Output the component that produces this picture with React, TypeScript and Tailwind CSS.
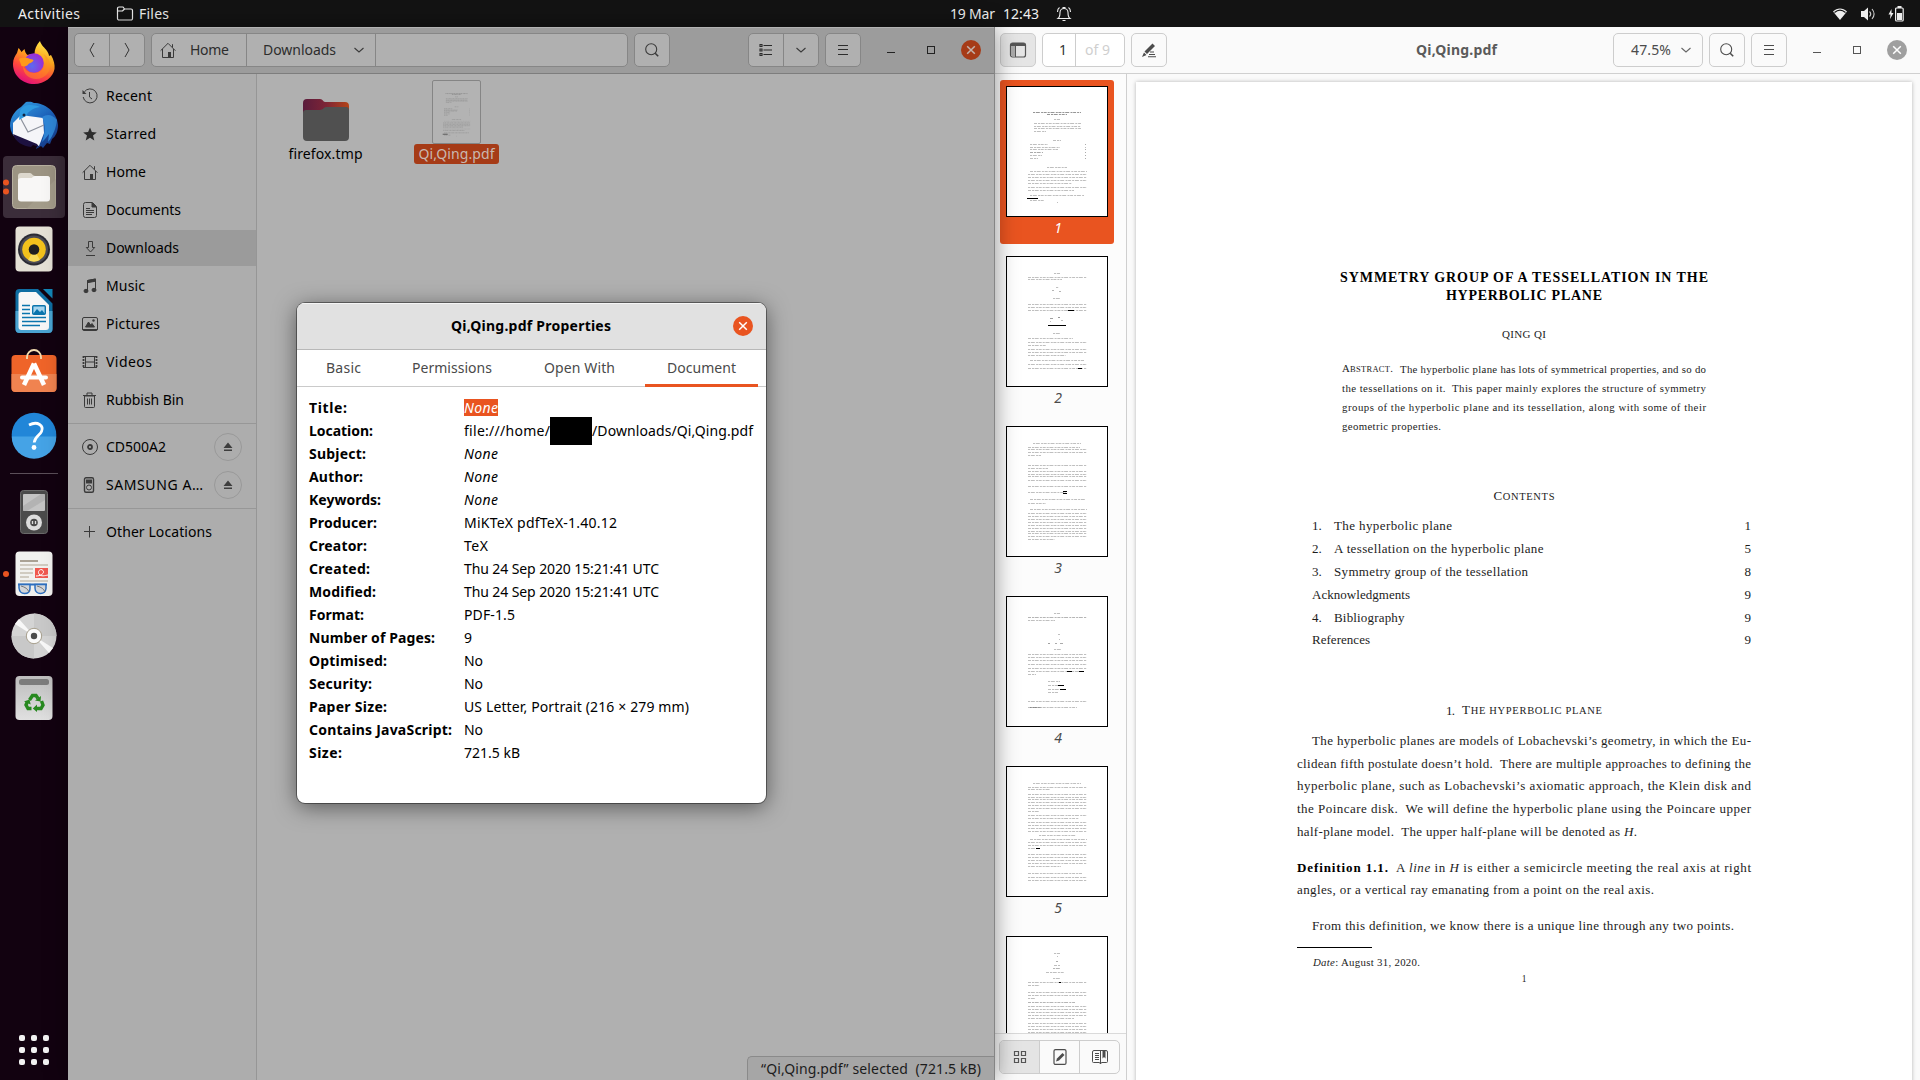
import { useLayoutEffect, useRef, useState } from "react";
import type { ReactNode } from "react";

/* Single text run whose tracking is adjusted so that it fills `w` pixels. */
function Fit({ w, className = "", children }: { w: number; className?: string; children: ReactNode }) {
  const ref = useRef<HTMLSpanElement>(null);
  const [ls, setLs] = useState(0);
  useLayoutEffect(() => {
    const el = ref.current;
    if (!el) return;
    const n = (el.textContent ?? "").length;
    const natural = el.getBoundingClientRect().width;
    if (n > 1) setLs((w - natural) / (n - 1));
  }, [w]);
  return (
    <span ref={ref} className={"inline-block shrink-0 whitespace-pre " + className} style={{ letterSpacing: ls, marginRight: -ls }}>
      {children}
    </span>
  );
}

/* ---------- Small symbolic icons ---------- */

const HomeIcon = () => (
  <svg width="16" height="16" viewBox="0 0 16 16" fill="none" stroke="#3a3a3a" strokeWidth="1">
    <path d="M.6 8.7 8 1.3l7.4 7.4M2.5 7v8.5h11V7M12.5 5.5V2.2" />
    <path d="M8 10h3v5.5H8z" fill="#3a3a3a" stroke="none" />
  </svg>
);
const icons: Record<string, ReactNode> = {
  recent: (
    <svg width="16" height="16" viewBox="0 0 16 16" fill="none" stroke="#3a3a3a">
      <path d="M2.3 4A7 7 0 1 1 1.2 9" />
      <path d="M7.5 4v5l2.5 2" />
      <path d="M.5 2v4h4z" fill="#3a3a3a" stroke="none" />
    </svg>
  ),
  starred: (
    <svg width="16" height="16" viewBox="0 0 16 16">
      <path d="m8 1.5 1.9 4.6 4.9.3-3.8 3.1 1.3 5L8 11.8l-4.3 2.7 1.3-5L1.2 6.4l4.9-.3z" fill="#2d2d2d" />
    </svg>
  ),
  home: <HomeIcon />,
  documents: (
    <svg width="16" height="16" viewBox="0 0 16 16" fill="none" stroke="#3a3a3a">
      <path d="M3.5.5h7l4 4v9a2 2 0 0 1-2 2h-9a2 2 0 0 1-2-2v-11a2 2 0 0 1 2-2z" />
      <path d="M10 1v4h4zM4 6.5h4M4 8.5h8M4 10.5h8M4 12.5h6" fill="#3a3a3a" />
    </svg>
  ),
  downloads: (
    <svg width="16" height="16" viewBox="0 0 16 16" fill="none" stroke="#3a3a3a">
      <path d="M6.5 1.500h4v6h2.200L8.500 12 4.300 7.500h2.200zM4 15.500h9" />
    </svg>
  ),
  music: (
    <svg width="16" height="16" viewBox="0 0 16 16" fill="none" stroke="#3a3a3a">
      <path d="M5.500 13V2.500L13.500 1v11" />
      <path d="M5.500 2.500 13.500 1v2.200l-8 1.500z" fill="#3a3a3a" />
      <ellipse cx="4" cy="13" rx="2" ry="1.700" fill="#3a3a3a" />
      <ellipse cx="12" cy="12" rx="2" ry="1.700" fill="#3a3a3a" />
    </svg>
  ),
  pictures: (
    <svg width="16" height="16" viewBox="0 0 16 16" fill="none" stroke="#3a3a3a">
      <rect x=".5" y="1.500" width="15" height="13" rx="1.500" />
      <path d="M.5 13.500h15M3.500 11l3-5 2 3 1.500-1.500 2.500 3.500z" fill="#3a3a3a" />
      <circle cx="11.500" cy="4.500" r="1.200" fill="#3a3a3a" stroke="none" />
    </svg>
  ),
  videos: (
    <svg width="16" height="16" viewBox="0 0 16 16" fill="none" stroke="#3a3a3a">
      <path d="M1 2.500h14M1 13.500h14M4 8h8M3.500 2v12M12.500 2v12" />
      <path d="M1.500 2v12M14.500 2v12" strokeWidth="1.800" strokeDasharray="2 1" />
    </svg>
  ),
  bin: (
    <svg width="16" height="16" viewBox="0 0 16 16" fill="none" stroke="#3a3a3a">
      <path d="M1 3.500h13M5 3V1h5v2M2.500 4v10.500a1 1 0 0 0 1 1h8a1 1 0 0 0 1-1V4M5.500 6.500v6M7.500 6.500v6M9.500 6.500v6" />
      <path d="M2 3h11v1.500H2z" fill="#3a3a3a" stroke="none" />
    </svg>
  ),
  disc: (
    <svg width="16" height="16" viewBox="0 0 16 16" fill="none" stroke="#3a3a3a">
      <circle cx="8" cy="8" r="7.500" />
      <circle cx="8" cy="8" r="2" strokeWidth="1.800" />
    </svg>
  ),
  player: (
    <svg width="16" height="16" viewBox="0 0 16 16" fill="none" stroke="#3a3a3a">
      <rect x="2.500" y=".8" width="9" height="14.400" rx="1.500" strokeWidth="1.400" />
      <path d="M4 2.500h6v4H4z" fill="#3a3a3a" stroke="none" />
      <circle cx="7" cy="10.500" r="2.500" />
    </svg>
  ),
  plus: (
    <svg width="16" height="16" viewBox="0 0 16 16" fill="none" stroke="#3a3a3a">
      <path d="M7.500 2v11.500M2 7.500h11" />
    </svg>
  ),
};

const Chevron = ({ color = "#3a3a3a" }: { color?: string }) => (
  <svg width="12" height="12" viewBox="0 0 12 12" fill="none" stroke={color} strokeWidth="1.100">
    <path d="m1.500 4 4.500 4L10.500 4" />
  </svg>
);
const Search = ({ color = "#3a3a3a" }: { color?: string }) => (
  <svg width="16" height="16" viewBox="0 0 16 16" fill="none" stroke={color} strokeWidth="1.100">
    <circle cx="7.200" cy="7.200" r="5.500" />
    <path d="m11.200 11.200 3 3" strokeWidth="1.600" />
  </svg>
);
const Burger = ({ color = "#2d2d2d" }: { color?: string }) => (
  <svg width="16" height="16" viewBox="0 0 16 16" stroke={color}>
    <path d="M3 3.500h10M3 7.500h10M3 12.500h10" />
  </svg>
);
const Cross = ({ color }: { color: string }) => (
  <svg width="20" height="20" viewBox="0 0 20 20" stroke={color} strokeWidth="1.500">
    <path d="m6.200 6.200 7.600 7.600M13.800 6.200l-7.600 7.600" />
  </svg>
);

/* ---------- Dock icons (48 px grid) ---------- */

const Firefox = () => (
  <svg width="48" height="48" viewBox="0 0 48 48">
    <defs>
      <linearGradient id="ff1" x1=".8" y1="0" x2=".35" y2="1">
        <stop offset="0" stopColor="#fff14f" />
        <stop offset=".4" stopColor="#ffa51e" />
        <stop offset=".7" stopColor="#ff4a3c" />
        <stop offset="1" stopColor="#e2107a" />
      </linearGradient>
      <radialGradient id="ff2" cx=".4" cy=".65" r=".6">
        <stop offset="0" stopColor="#5a6bf0" />
        <stop offset="1" stopColor="#9a2fd6" />
      </radialGradient>
    </defs>
    <path d="M30 2c1 4 5 7 7 10 1 2 2 3 2 5l2-1c3 5 4 10 3.500 14C43 38 35 45 24 45S3 37 3 25c0-5 2-8 4-11l1.500-5c1 1 2 2 3 4l3-3c.5 3 1.500 5 3 6 2-1 4-1 7-1 0-5 2-9 5.500-13z" fill="url(#ff1)" />
    <circle cx="24" cy="24" r="9.800" fill="url(#ff2)" />
    <path d="M9 20c3-2 9-1 11 0 2 .5 3.500.5 3.500 1.500-1 2-4 2.500-5 3.500-1 2-4 3-7 2z" fill="#ff9a1a" />
    <path d="M33 15c3 3 4 8 1 13-2 4-6 6-10 6-5 0-9-3-11-7 0 8 6 13 13 13 9 0 15-7 14-15-1-5-3-8-7-10z" fill="#ff9420" opacity=".5" />
  </svg>
);
const Thunderbird = () => (
  <svg width="48" height="48" viewBox="0 0 48 48">
    <defs>
      <linearGradient id="tb1" x1=".2" y1="0" x2=".8" y2="1">
        <stop offset="0" stopColor="#3098dd" />
        <stop offset=".5" stopColor="#1b5eb8" />
        <stop offset="1" stopColor="#173a86" />
      </linearGradient>
    </defs>
    <path d="M16 1c4-.5 6 0 8 1 10 0 23 8 24 22 0 6-2 11-6 14l-2 5-3-1-4 5-2-2-5 3 2-5C12 45 1 37 0 25 0 15 6 9 11 6z" fill="url(#tb1)" />
    <path d="M3 22l8-8 22 3 1 15-5 13L3 34z" fill="#f5f5f8" />
    <path d="m11 18 7 13 16-7" fill="none" stroke="#8d929d" strokeWidth="1.200" />
    <path d="M10 10C13 3 22 3 30 6c-8 1-12 5-14 9l-7 4z" fill="#2f9be0" />
    <path d="M32 16c5-3 10-3 15 3-1 8-4 16-9 22l1-8-4 5-3 3c3-9 4-17 0-25z" fill="#2f86d6" />
    <circle cx="14" cy="14" r="1.500" fill="#13233f" />
    <path d="M3 33l24 10 2 3-6-2-2 2C13 45 5 41 3 33z" fill="#1d1140" />
  </svg>
);
const FilesApp = () => (
  <svg width="48" height="48" viewBox="0 0 48 48">
    <rect x="2.500" y="2.500" width="43" height="43" rx="4" fill="#9c9483" stroke="#b7b09f" />
    <path d="M46 16v26a4 4 0 0 1-4 4H16z" fill="#a9a190" opacity=".6" />
    <path d="M8 13a3 3 0 0 1 3-3h9c2 0 2.500 3 5 3h12a3 3 0 0 1 3 3v6H8z" fill="#ddd8cd" />
    <rect x="8" y="15" width="32" height="23.500" rx="3" fill="#f8f7f6" />
    <path d="M8 18c0-1 1-2 2-2h10c2 0 2.500-3 5-3h12a3 3 0 0 1 3 3v6H8z" fill="#f8f7f6" />
  </svg>
);
const Speaker = () => (
  <svg width="48" height="48" viewBox="0 0 48 48">
    <rect x="5.500" y="1.500" width="37" height="45" rx="4" fill="#e5e1d6" />
    <circle cx="24" cy="24.500" r="16" fill="#2b2b34" />
    <circle cx="24" cy="24.500" r="14" fill="#4b4b55" />
    <circle cx="24" cy="24.500" r="11.800" fill="#f2c11c" />
    <path d="M24 24.500 18 35a12 12 0 0 0 12 0z" fill="#f9dc5a" />
    <circle cx="24" cy="24.500" r="5.300" fill="#202020" />
  </svg>
);
const Writer = () => (
  <svg width="48" height="48" viewBox="0 0 48 48">
    <path d="M9.500 2H28l14.500 14.500V42a4 4 0 0 1-4 4h-29a4 4 0 0 1-4-4V6a4 4 0 0 1 4-4z" fill="#0f6ea3" />
    <path d="M5.500 24h37v18a4 4 0 0 1-4 4h-29a4 4 0 0 1-4-4z" fill="#4aa3d1" />
    <path d="M33 2h9.500v9.500z" fill="#1286b8" />
    <path d="M11.500 5H26l13 13v22a3 3 0 0 1-3 3H11.500a3 3 0 0 1-3-3V8a3 3 0 0 1 3-3z" fill="#f7f7f7" />
    <path d="M12 18.500h8M12 22.500h8M12 26.500h8M12 30.500h24M12 34.500h24M12 38.500h18" stroke="#0b75ad" strokeWidth="1.700" />
    <rect x="22.700" y="18.700" width="12.600" height="8.600" rx="1" fill="#a6d5ef" stroke="#0b75ad" strokeWidth="1.400" />
    <path d="m23 27 4-5 3 3 2-2 3 4z" fill="#0b75ad" />
  </svg>
);
const Software = () => (
  <svg width="48" height="48" viewBox="0 0 48 48">
    <rect x="1.500" y="6" width="45" height="37" rx="4" fill="#ef6429" />
    <path d="M1.500 25h45v14a4 4 0 0 1-4 4h-37a4 4 0 0 1-4-4z" fill="#f08350" />
    <path d="M17 10V8a7 7 0 0 1 14 0v2" fill="none" stroke="#f3ddb1" strokeWidth="1.800" />
    <path d="M24 14.500 14 36M24 14.500 34 36" fill="none" stroke="#fff" strokeWidth="4.500" />
    <path d="M12 28.500h24" stroke="#fff" strokeWidth="4" strokeLinecap="round" />
  </svg>
);
const Help = () => (
  <svg width="48" height="48" viewBox="0 0 48 48">
    <circle cx="24" cy="24" r="22.300" fill="#2186d8" />
    <path d="M1.700 25.500a22.300 22.300 0 0 0 44.600 0z" fill="#45a3e6" />
    <path d="M19 14c9-4.500 15 1 12.500 6.500-1.700 3.800-6.800 5-7.300 11" fill="none" stroke="#fff" strokeWidth="2.800" />
    <circle cx="24" cy="36.500" r="2.400" fill="#fff" />
  </svg>
);
const Ipod = () => (
  <svg width="48" height="48" viewBox="0 0 48 48">
    <rect x="10.500" y="2.500" width="27" height="43" rx="3" fill="#4b4b4b" stroke="#6a6a6a" />
    <rect x="13" y="6" width="22" height="17" rx="1" fill="#c4c4c4" />
    <path d="M13 18 31 6h4v6L17 23h-4z" fill="#a8a8a8" opacity=".6" />
    <circle cx="24" cy="34.500" r="8" fill="#dcdcdc" />
    <circle cx="24" cy="34.500" r="3.800" fill="#4b4b4b" />
    <path d="M22.500 33v3M25.500 33v3" stroke="#dcdcdc" strokeWidth="1.300" />
  </svg>
);
const EvinceApp = () => (
  <svg width="48" height="48" viewBox="0 0 48 48">
    <rect x="5.500" y="1.500" width="37" height="44.500" rx="4" fill="#f1f1ef" />
    <path d="M10 11h18" stroke="#aaa295" strokeWidth="2" />
    <path d="M10 15h28M10 19h13M10 23h13M10 27h9M10 31h28" stroke="#c5bfb2" strokeWidth="1.700" />
    <rect x="25" y="18" width="13" height="10" fill="#f0584f" />
    <path d="M26 26c5 0 9-3 7-5.500s-6 .5-4 3.500 6 1.500 9 1" fill="none" stroke="#fff" />
    <path d="M8 34.500h29" stroke="#2e6fbf" strokeWidth="2" />
    <path d="M9 34.500h11v4c0 4-3 5-5.500 5S9.500 42 9 38zM25 34.500h11v4c-.5 4-3 5-5.500 5S25 42 25 38z" fill="#d3d6da" stroke="#2e6fbf" strokeWidth="1.500" />
    <path d="M11 36c4 1 7 3 8 6M27 36c4 1 7 3 8 6" fill="none" stroke="#777" />
  </svg>
);
const Disc = () => (
  <svg width="48" height="48" viewBox="0 0 48 48">
    <circle cx="24" cy="24" r="22.500" fill="#d4d4d4" />
    <path d="M24 24V1.500A22.500 22.500 0 0 1 46.500 24z" fill="#c8c8c8" />
    <path d="M24 24v22.500A22.500 22.500 0 0 1 1.500 24z" fill="#c8c8c8" />
    <path d="M24 24 5 12l4-5zM24 24l19 12-4 5z" fill="#f8f8f8" />
    <circle cx="24" cy="24" r="7.700" fill="#fafafa" stroke="#a79f8d" />
    <circle cx="24" cy="24" r="3.200" fill="#4b4b4b" />
  </svg>
);
const Trash = () => (
  <svg width="48" height="48" viewBox="0 0 48 48">
    <defs>
      <linearGradient id="tr" x1="0" y1="0" x2="0" y2="1">
        <stop offset="0" stopColor="#bdbdbd" />
        <stop offset="1" stopColor="#e0e0e0" />
      </linearGradient>
    </defs>
    <rect x="5.500" y="2" width="37" height="44" rx="4" fill="url(#tr)" />
    <rect x="9" y="5" width="30" height="6" rx="2.500" fill="#7c7c7c" />
    <g fill="none" stroke="#27891f" strokeWidth="3.400">
      <path d="m19.500 26 3-4.500h3.500l2 3" />
      <path d="m31.500 27 1.500 4-2 3.500h-5" />
      <path d="m21.500 34.500h-3.500l-2-3.500 1.500-3.500" />
    </g>
    <path d="m25 26.500 5.500 1 .5-5.500zM27 30.500 22.800 34.500l4.200 3.500zM14 27.500l5.500-2 1.200 5z" fill="#27891f" />
  </svg>
);

function Slot({ children, active = false, dots = 0 }: { children: ReactNode; active?: boolean; dots?: number }) {
  return (
    <div className={"relative flex h-[62px] w-[62px] shrink-0 items-center justify-center rounded " + (active ? "bg-[#3b2d3a]" : "")}>
      {children}
      {dots > 0 && (
        <div className="absolute left-0 top-1/2 flex -translate-y-1/2 flex-col gap-[3px]">
          {Array.from({ length: dots }, (_, i) => (
            <span key={i} className="size-[6px] rounded-full bg-[#e95420]" />
          ))}
        </div>
      )}
    </div>
  );
}

function Dock() {
  return (
    <nav className="flex w-[68px] shrink-0 flex-col items-center bg-[#120210] pt-[5px]">
      <Slot><Firefox /></Slot>
      <Slot><Thunderbird /></Slot>
      <Slot active dots={2}><FilesApp /></Slot>
      <Slot><Speaker /></Slot>
      <Slot><Writer /></Slot>
      <Slot><Software /></Slot>
      <Slot><Help /></Slot>
      <div className="mb-[7px] mt-[7px] h-px w-12 bg-[#5b4f59]" />
      <Slot><Ipod /></Slot>
      <Slot dots={1}><EvinceApp /></Slot>
      <Slot><Disc /></Slot>
      <Slot><Trash /></Slot>
      <div className="mb-[15px] mt-auto grid grid-cols-3 gap-[6px]">
        {Array.from({ length: 9 }, (_, i) => (
          <span key={i} className="size-[6px] rounded-[2px] bg-[#f2f2f2]" />
        ))}
      </div>
    </nav>
  );
}

/* ---------- Miniature pages ---------- */

type Mark = [number, number, number, string?];
const L = (...ys: number[]): Mark[] => ys.map((y) => [y, 22, 81]);
const pageMarks: Mark[][] = [
  [
    [26, 27, 75, "#555"], [28, 41, 61, "#555"], [33, 48, 54],
    [37, 28, 75], [40, 28, 75], [42, 28, 75], [45, 28, 40], [54, 47, 55],
    [58, 24, 42], [61, 24, 54], [63, 24, 52], [66, 24, 37, "#777"], [69, 24, 36], [72, 24, 32],
    [58, 79, 80, "#777"], [61, 79, 80], [63, 79, 80, "#777"], [66, 79, 80, "#777"], [69, 79, 80, "#777"], [72, 79, 80, "#777"],
    [81, 41, 61], [85, 24, 81, "#999"], ...L(88, 91, 94), [97, 22, 66], [101, 22, 81, "#999"], [104, 22, 68],
    [109, 24, 78], [112, 21, 32, "#000"], [114, 24, 38], [116, 51, 52],
  ],
  [
    [17, 48, 54], [21, 22, 81, "#999"], [23, 22, 56], [34, 46, 48, "#888"], [31, 50, 53], [35, 53, 55, "#888"], [42, 47, 55],
    [48, 22, 81, "#999"], ...L(51, 54), [54, 62, 68, "#000"], [62, 44, 47, "#666"], [61, 52, 54, "#555"], [65, 44, 45], [64, 55, 57],
    [69, 42, 60, "#000"], [77, 47, 55], [82, 22, 67, "#999"], ...L(86), [89, 22, 40], [93, 22, 81, "#999"], ...L(96), [99, 22, 60],
    [104, 24, 78], ...L(108, 112), [112, 72, 76, "#000"],
  ],
  [
    [17, 27, 75, "#999"], [21, 22, 74], ...L(23, 26), [29, 22, 35], ...L(39), [42, 22, 42], ...L(45, 48, 50, 54, 60), [66, 22, 60], [65, 57, 61, "#000"], [67, 57, 61, "#000"],
    [73, 24, 79], [77, 22, 40], [83, 24, 81], ...L(87, 90, 93, 96, 99, 102, 105, 107, 110), [113, 22, 49],
  ],
  [
    [17, 48, 54], [21, 22, 81, "#888"], [24, 22, 49], [38, 52, 54], [43, 53, 54], [47, 42, 44, "#666"], [47, 49, 51, "#777"], [47, 54, 58, "#777"], [53, 48, 55],
    ...L(58, 61, 64, 68, 72), [75, 22, 78], [75, 61, 66, "#000"], [75, 73, 78, "#000"], [78, 22, 30], [85, 42, 54], [89, 42, 56], [89, 52, 58, "#000"],
    [93, 42, 54], [93, 54, 60, "#000"], [96, 42, 52], ...L(105), [111, 22, 71], [111, 24, 35, "#666"],
  ],
  [
    [17, 27, 75, "#999"], [21, 22, 81, "#999"], [23, 22, 44], ...L(28, 31, 33, 36, 39, 42), [45, 22, 33], [49, 22, 81, "#999"], [52, 22, 73],
    ...L(56, 59, 62, 65), [69, 33, 70], [73, 24, 81], ...L(76, 79), [82, 22, 32], [82, 30, 34, "#000"], ...L(88, 91, 94, 97), [100, 22, 55], [107, 22, 76, "#999"], ...L(111, 114),
  ],
  [
    [17, 48, 54], [20, 51, 52], [25, 50, 52, "#777"], [29, 48, 54], [32, 47, 55, "#888"], [36, 40, 58], [42, 47, 55, "#999"], ...L(46), [46, 53, 55, "#000"], [49, 22, 34],
    ...L(56, 59), [62, 22, 30], [66, 22, 69, "#888"], ...L(70, 73, 76, 79), [82, 22, 68], ...L(87, 90, 93, 96),
  ],
];

function MiniPage({ marks }: { marks: Mark[] }) {
  return (
    <svg viewBox="0 0 102 131" className="block size-full" preserveAspectRatio="none" fill="none">
      {marks.map(([y, a, b, c], i) => (
        <path
          key={i}
          d={`M${a} ${y + 0.5}H${b}`}
          stroke={c ?? "#000"}
          strokeOpacity={c === "#000" ? 1 : c ? 0.62 : 0.25}
          strokeDasharray={c === "#000" ? undefined : i % 2 ? "3 1 2 .7 4 1.2 2 .8" : "2 .8 4 1.300 2 .6 3 1"}
        />
      ))}
    </svg>
  );
}

/* ---------- Files window ---------- */

const btn = "flex items-center justify-center rounded-[5px] border border-[#868686] bg-[#b0b0b0]";

const places: [string, string, number][] = [
  ["recent", "Recent", 46], ["starred", "Starred", 50], ["home", "Home", 40], ["documents", "Documents", 75],
  ["downloads", "Downloads", 73], ["music", "Music", 39], ["pictures", "Pictures", 54], ["videos", "Videos", 46], ["bin", "Rubbish Bin", 78],
];

function Place({ icon, label, w, selected = false, eject = false }: { icon: string; label: string; w: number; selected?: boolean; eject?: boolean }) {
  return (
    <div className={"flex h-9 items-center pl-[14px] pr-[14px] text-black " + (selected ? "bg-[#9b9b9b]" : "")}>
      {icons[icon]}
      <Fit w={w} className="ml-2">{label}</Fit>
      {eject && (
        <span className="ml-auto flex size-[28px] items-center justify-center rounded-full border border-[#999]">
          <svg width="10" height="10" viewBox="0 0 10 10" fill="#3e3e3e">
            <path d="M5 .5 9.500 6h-9zM1 7.500h8V9H1z" />
          </svg>
        </span>
      )}
    </div>
  );
}

function FilesWindow() {
  return (
    <section className="relative z-10 flex w-[927px] shrink-0 flex-col border-r border-[#858585] bg-[#b0b0b0] shadow-[0_0_22px_rgba(0,0,0,0.42)]">
      <header className="flex h-[47px] shrink-0 items-center border-b border-b-[#7d7d7d] bg-[#9c9c9c] pl-[6px] text-[#2d2d2d] shadow-[inset_0_1px_0_#b2b2b2]">
        <div className={btn + " h-[34px] w-[71px]"}>
          <span className="flex h-full flex-1 items-center justify-center border-r border-[#868686]">
            <svg width="10" height="16" viewBox="0 0 10 16" fill="none" stroke="#333"><path d="M7 1 3 8l4 7" /></svg>
          </span>
          <span className="flex h-full flex-1 items-center justify-center">
            <svg width="10" height="16" viewBox="0 0 10 16" fill="none" stroke="#333"><path d="m3 1 4 7-4 7" /></svg>
          </span>
        </div>
        <div className={btn + " ml-[6px] h-[34px] w-[477px] !justify-start"}>
          <span className="flex h-full w-[95px] items-center border-r border-[#868686] pl-2">
            <HomeIcon />
            <Fit w={39} className="ml-[14px]">Home</Fit>
          </span>
          <span className="flex h-full w-[129px] items-center border-r border-[#868686] pl-4">
            <Fit w={73}>Downloads</Fit>
            <span className="ml-[17px]"><Chevron /></span>
          </span>
        </div>
        <div className={btn + " ml-[6px] h-[34px] w-[36px]"}><Search /></div>
        <div className={btn + " ml-[78px] h-[34px] w-[71px]"}>
          <span className="flex h-full flex-1 items-center justify-center border-r border-[#868686]">
            <svg width="16" height="16" viewBox="0 0 16 16" fill="none" stroke="#2a2a2a" strokeWidth="1.100">
              <path d="M5.500 3.500H14M5.500 8H14M5.500 12.500H14M2 2.500h2v2H2zM2 7h2v2H2zM2 11.500h2v2H2z" />
            </svg>
          </span>
          <span className="flex h-full flex-1 items-center justify-center"><Chevron /></span>
        </div>
        <div className={btn + " ml-[6px] h-[34px] w-[36px]"}><Burger /></div>
        <div className="ml-[26px] mt-[4px] h-px w-[8px] bg-[#222]" />
        <div className="ml-[32px] size-[8px] border border-[#222]" />
        <div className="ml-[26px] size-5 rounded-full bg-[#a63b17]"><Cross color="#c4b3ac" /></div>
      </header>
      <div className="flex min-h-0 flex-1">
        <aside className="flex w-[189px] shrink-0 flex-col border-r border-[#969696] bg-[#adadad] pt-[4px]">
          <div className="flex flex-col gap-[2px]">
            {places.map(([i, l, w]) => <Place key={l} icon={i} label={l} w={w} selected={i === "downloads"} />)}
          </div>
          <div className="my-[5px] h-px bg-[#979797]" />
          <div className="flex flex-col gap-[2px]">
            <Place icon="disc" label="CD500A2" w={60} eject />
            <Place icon="player" label="SAMSUNG A…" w={97} eject />
          </div>
          <div className="my-[5px] h-px bg-[#979797]" />
          <Place icon="plus" label="Other Locations" w={106} />
        </aside>
        <main className="flex flex-1 flex-col">
          <div className="flex pl-[3px] pt-[6px]">
            <div className="flex w-[131px] flex-col items-center pt-[19px] text-black">
              <svg width="46" height="42" viewBox="0 0 46 42">
                <defs>
                  <linearGradient id="fd"><stop offset="0" stopColor="#5a1c3c" /><stop offset=".5" stopColor="#7d2436" /><stop offset="1" stopColor="#b34418" /></linearGradient>
                </defs>
                <path d="M0 4a4 4 0 0 1 4-4h13c3 0 3 3 5 3h20a4 4 0 0 1 4 4v14H0z" fill="url(#fd)" />
                <path d="M0 14a3 3 0 0 1 3-3h14c3 0 4-3 6-3h20a3 3 0 0 1 3 3v27a4 4 0 0 1-4 4H4a4 4 0 0 1-4-4z" fill="#505050" />
              </svg>
              <Fit w={74} className="mt-[3px] h-[20px] leading-[20px]">firefox.tmp</Fit>
            </div>
            <div className="flex w-[131px] flex-col items-center">
              <div className="h-[64px] w-[49px] rounded-[2px] border border-[#858585] bg-[#b3b3b3]">
                <MiniPage marks={pageMarks[0]} />
              </div>
              <span className="flex h-5 w-[85px] items-center justify-center rounded-[3px] bg-[#a63b17] text-[#c9b8b0]">
                <Fit w={76}>Qi,Qing.pdf</Fit>
              </span>
            </div>
          </div>
          <div className="ml-auto mt-auto flex h-[24px] w-[247px] items-center rounded-tl-[5px] border-l border-t border-[#8a8a8a] bg-[#a6a6a6] pl-[13px] text-[#1c1c1c]">
            <Fit w={220}>{"“Qi,Qing.pdf” selected  (721.5 kB)"}</Fit>
          </div>
        </main>
      </div>
      <PropertiesDialog />
    </section>
  );
}

/* ---------- Properties dialog ---------- */

const props: [string, number, string, number][] = [
  ["Title:", 38, "None", 34], ["Location:", 64, "", 0], ["Subject:", 57, "None", 34], ["Author:", 54, "None", 34], ["Keywords:", 72, "None", 34],
  ["Producer:", 68, "MiKTeX pdfTeX-1.40.12", 153], ["Creator:", 58, "TeX", 24],
  ["Created:", 61, "Thu 24 Sep 2020 15:21:41 UTC", 195], ["Modified:", 67, "Thu 24 Sep 2020 15:21:41 UTC", 195],
  ["Format:", 55, "PDF-1.5", 51], ["Number of Pages:", 126, "9", 8], ["Optimised:", 78, "No", 19], ["Security:", 63, "No", 19],
  ["Paper Size:", 78, "US Letter, Portrait (216 × 279 mm)", 225], ["Contains JavaScript:", 143, "No", 19], ["Size:", 33, "721.5 kB", 56],
];

function PropertiesDialog() {
  return (
    <div className="absolute left-[229px] top-[276px] flex h-[500px] w-[469px] flex-col overflow-hidden rounded-lg bg-white text-black shadow-[0_0_0_1px_rgba(0,0,0,0.4),0_4px_22px_rgba(0,0,0,0.5)]">
      <div className="flex h-[47px] shrink-0 items-center border-b border-b-[#b8b8b8] bg-[#e1e1e1] pl-[154px] shadow-[inset_0_1px_0_#f5f5f5]">
        <Fit w={160} className="font-bold">Qi,Qing.pdf Properties</Fit>
        <div className="ml-auto mr-[13px] size-5 rounded-full bg-[#e95420]"><Cross color="#fff" /></div>
      </div>
      <div className="flex h-[37px] shrink-0 items-center border-b border-[#cacaca] pl-[29px] text-[#4a4a4a]">
        <Fit w={35}>Basic</Fit>
        <Fit w={80} className="ml-[51px]">Permissions</Fit>
        <Fit w={71} className="ml-[52px]">Open With</Fit>
        <span className="relative ml-[30px] flex h-[37px] w-[113px] items-center justify-center">
          <Fit w={69}>Document</Fit>
          <span className="absolute bottom-0 left-0 h-[3px] w-full bg-[#e95420]" />
        </span>
      </div>
      <div className="flex flex-col pl-3 pt-[9px]">
        {props.map(([k, kw, v, vw]) => (
          <div key={k} className="flex h-[23px] items-center">
            <span className="flex w-[155px] shrink-0"><Fit w={kw} className="font-bold">{k}</Fit></span>
            {k === "Location:" ? (
              <span className="flex items-center">
                <Fit w={86}>file:///home/</Fit>
                <span className="-my-1 h-[28px] w-[42px] bg-black" />
                <Fit w={161}>/Downloads/Qi,Qing.pdf</Fit>
              </span>
            ) : k === "Title:" ? (
              <span className="flex h-[17px] w-[34px] items-center bg-[#e95420] text-white"><Fit w={vw} className="italic">{v}</Fit></span>
            ) : (
              <Fit w={vw} className={v === "None" ? "italic" : ""}>{v}</Fit>
            )}
          </div>
        ))}
      </div>
    </div>
  );
}

/* ---------- Document viewer ---------- */

const vbtn = "flex items-center justify-center rounded-[5px] border border-[#cdcdcd]";

function PdfPage() {
  const row = "flex h-[22.8px] shrink-0 items-center";
  return (
    <article className="flex flex-col pl-[161px] font-['Liberation_Serif',serif] text-[13px] text-[#1c1c1c]">
      <div className="mt-[187px] flex w-[454px] flex-col items-center text-[14px] font-bold text-black">
        <div className="flex h-[18px] items-center"><Fit w={368}>SYMMETRY GROUP OF A TESSELLATION IN THE</Fit></div>
        <div className="flex h-[18px] items-center"><Fit w={156}>HYPERBOLIC PLANE</Fit></div>
      </div>
      <div className="mt-[20px] flex h-[18px] w-[454px] items-center justify-center text-[11px]"><Fit w={44}>QING QI</Fit></div>
      <div className="mt-[16px] flex flex-col pl-[45px] text-[10.8px]">
        <div className="flex h-[19px] items-center">
          <Fit w={51}>A<span className="text-[8.5px]">BSTRACT</span>.</Fit>
          <Fit w={306} className="ml-[7px]">The hyperbolic plane has lots of symmetrical properties, and so do</Fit>
        </div>
        <div className="flex h-[19px] items-center"><Fit w={364}>{"the tessellations on it.  This paper mainly explores the structure of symmetry"}</Fit></div>
        <div className="flex h-[19px] items-center"><Fit w={364}>groups of the hyperbolic plane and its tessellation, along with some of their</Fit></div>
        <div className="flex h-[19px] items-center"><Fit w={99}>geometric properties.</Fit></div>
      </div>
      <div className="mt-[50px] flex h-[22px] w-[454px] items-center justify-center"><Fit w={61}>C<span className="text-[10.5px]">ONTENTS</span></Fit></div>
      <div className="mt-[8px] flex w-[454px] flex-col pl-[15px]">
        {([
          ["1.", "The hyperbolic plane", 118, "1"], ["2.", "A tessellation on the hyperbolic plane", 209.5, "5"],
          ["3.", "Symmetry group of the tessellation", 194, "8"], ["", "Acknowledgments", 98, "9"],
          ["4.", "Bibliography", 70.5, "9"], ["", "References", 58, "9"],
        ] as [string, string, number, string][]).map(([n, t, w, p]) => (
          <div key={t} className={row}>
            {n && <span className="w-[22px]">{n}</span>}
            <Fit w={w}>{t}</Fit>
            <span className="ml-auto">{p}</span>
          </div>
        ))}
      </div>
      <div className="mt-[48px] flex h-[22px] w-[454px] items-center justify-center">
        <Fit w={9}>1.</Fit>
        <Fit w={140} className="ml-[7px]">T<span className="text-[10.5px]">HE HYPERBOLIC PLANE</span></Fit>
      </div>
      <div className="mt-[7.6px] flex flex-col">
        <div className={row + " pl-[15px]"}><Fit w={439}>The hyperbolic planes are models of Lobachevski’s geometry, in which the Eu-</Fit></div>
        <div className={row}><Fit w={454}>{"clidean fifth postulate doesn’t hold.  There are multiple approaches to defining the"}</Fit></div>
        <div className={row}><Fit w={454}>hyperbolic plane, such as Lobachevski’s axiomatic approach, the Klein disk and</Fit></div>
        <div className={row}><Fit w={454}>{"the Poincare disk.  We will define the hyperbolic plane using the Poincare upper"}</Fit></div>
        <div className={row}><Fit w={340}>{"half-plane model.  The upper half-plane will be denoted as "}<i>H</i>.</Fit></div>
      </div>
      <div className="mt-[13px] flex flex-col">
        <div className={row}>
          <Fit w={91} className="font-bold text-black">Definition 1.1.</Fit>
          <Fit w={355} className="ml-[8px]">A <i>line</i> in <i>H</i> is either a semicircle meeting the real axis at right</Fit>
        </div>
        <div className={row + " -mt-[0.6px]"}><Fit w={357}>angles, or a vertical ray emanating from a point on the real axis.</Fit></div>
      </div>
      <div className={row + " mt-[13px] pl-[15px]"}><Fit w={422}>From this definition, we know there is a unique line through any two points.</Fit></div>
      <div className="mt-[9.6px] h-px w-[75px] shrink-0 bg-black" />
      <div className="mt-[5.7px] flex h-[18px] items-center pl-4 text-[10.8px]"><Fit w={107}><i>Date</i>: August 31, 2020.</Fit></div>
      <div className="mt-px flex h-[14px] w-[454px] items-center justify-center text-[9.5px]">1</div>
    </article>
  );
}

function Viewer() {
  return (
    <section className="flex w-[925px] shrink-0 flex-col bg-[#fafafa]">
      <header className="flex h-[47px] shrink-0 items-center border-b border-[#d0d0d0] pl-[5px] text-[#4b4b4b]">
        <div className={vbtn + " h-[34px] w-[36px] bg-[#e5e5e5]"}>
          <svg width="18" height="18" viewBox="0 0 18 18">
            <rect x="1.500" y="2" width="15" height="14" rx="2" fill="none" stroke="#555" strokeWidth="1.200" />
            <path d="M1.500 4a2 2 0 0 1 2-2h11a2 2 0 0 1 2 2v1h-15z" fill="#555" />
            <path d="M2 5h4v10.500H4a2 2 0 0 1-2-2z" fill="#aaa" />
            <path d="M6.500 5v11" stroke="#555" />
          </svg>
        </div>
        <div className={vbtn + " ml-[6px] h-[34px] w-[83px] bg-white !justify-start"}>
          <span className="flex h-full w-[33px] items-center justify-end border-r border-[#cdcdcd] pr-[8px] text-[#333]">1</span>
          <Fit w={25} className="ml-[9px] text-[#cfcfcf]">of 9</Fit>
        </div>
        <div className={vbtn + " ml-[6px] h-[34px] w-[36px]"}>
          <svg width="16" height="16" viewBox="0 0 16 16" fill="#4c4c4c">
            <path d="M11.500 1.500 14 4 6 12l-2.500-2.500zM3 10.500 5.500 13 1 15zM9 9.500h4v1H9zM8 12h6v1H8zM7 14.200h8v1H7z" />
          </svg>
        </div>
        <Fit w={81} className="ml-[249px] font-bold text-[#5a5a5a]">Qi,Qing.pdf</Fit>
        <div className={vbtn + " ml-[116px] h-[34px] w-[90px] gap-[9px] pl-[7px]"}><Fit w={40}>47.5%</Fit><Chevron color="#666" /></div>
        <div className={vbtn + " ml-[6px] h-[34px] w-[36px]"}><Search color="#4c4c4c" /></div>
        <div className={vbtn + " ml-[6px] h-[34px] w-[36px]"}><Burger color="#4c4c4c" /></div>
        <div className="ml-[26px] mt-[4px] h-px w-[8px] bg-[#555]" />
        <div className="ml-[32px] size-[8px] border border-[#555]" />
        <div className="ml-[26px] size-5 rounded-full bg-[#9f9f9f]"><Cross color="#fff" /></div>
      </header>
      <div className="flex min-h-0 flex-1">
        <aside className="flex w-[132px] shrink-0 flex-col border-r border-[#cfcfcf] bg-[#fcfcfc]">
          <div className="flex min-h-0 flex-1 flex-col gap-[6px] overflow-hidden pl-[5px] pt-[6px]">
            {pageMarks.map((m, i) => (
              <div key={i} className={"flex h-[164px] w-[114px] shrink-0 flex-col items-center rounded-[3px] pt-[6px] italic " + (i === 0 ? "bg-[#e95420] text-white" : "text-[#4b4b4b]")}>
                <div className="h-[131px] w-[102px] shrink-0 bg-white outline outline-1 -outline-offset-1 outline-black"><MiniPage marks={m} /></div>
                {i < 5 && <span className="ml-[2px] mt-[1px] h-5 leading-[20px]">{i + 1}</span>}
              </div>
            ))}
          </div>
          <div className="flex h-[47px] shrink-0 items-center border-t border-[#dadada] bg-[#fafafa] pl-[4px]">
            <div className={vbtn + " h-[34px] w-[121px] overflow-hidden"}>
              <span className="flex h-full flex-1 items-center justify-center border-r border-[#cdcdcd] bg-[#e4e4e4]">
                <svg width="16" height="16" viewBox="0 0 16 16" fill="none" stroke="#555" strokeWidth="1.200"><path d="M2.500 2.500h4v4h-4zM9.500 2.500h4v4h-4zM2.500 9.500h4v4h-4zM9.500 9.500h4v4h-4z" /></svg>
              </span>
              <span className="flex h-full flex-1 items-center justify-center border-r border-[#cdcdcd]">
                <svg width="16" height="16" viewBox="0 0 16 16"><rect x="2" y=".6" width="12" height="14.800" rx="1.500" fill="none" stroke="#4c4c4c" strokeWidth="1.200" /><path d="m10.500 4 2 2-5.500 5.500-3 1 1-3z" fill="#4c4c4c" /></svg>
              </span>
              <span className="flex h-full flex-1 items-center justify-center">
                <svg width="16" height="16" viewBox="0 0 16 16" fill="none" stroke="#4c4c4c"><path d="M8.500 2v13M2 1.500h12a1.500 1.500 0 0 1 1.500 1.500v9.500a1 1 0 0 1-1 1H9.500l-1 1.500-1-1.500h-6a1 1 0 0 1-1-1V3A1.500 1.500 0 0 1 2 1.500zM3 4.500h4M3 6.500h4M3 8.500h4M3 10.500h4" /><path d="M10.500 1h3v8.500L12 8l-1.500 1.500z" fill="#4c4c4c" stroke="none" /></svg>
              </span>
            </div>
          </div>
        </aside>
        <main className="min-h-0 flex-1 overflow-hidden pl-[9px] pt-[8px]">
          <div className="h-[1004px] w-[776px] bg-white shadow-[0_0_4px_rgba(0,0,0,0.28)]"><PdfPage /></div>
        </main>
      </div>
    </section>
  );
}

function TopBar() {
  return (
    <div className="flex h-[27px] shrink-0 items-center bg-[#131313] text-[#f0f0f0]">
      <Fit w={62} className="ml-[18px]">Activities</Fit>
      <svg className="ml-[36px]" width="18" height="16" viewBox="0 0 18 16" fill="none" stroke="#eee" strokeWidth="1.200">
        <path d="M1.500 12.500v-10a1.500 1.500 0 0 1 1.500-1.500h4l1.500 2H15a1.500 1.500 0 0 1 1.500 1.500v8A1.500 1.500 0 0 1 15 14H3a1.500 1.500 0 0 1-1.500-1.500zM1.500 5h5l2-2" />
      </svg>
      <Fit w={30} className="ml-[5px]">Files</Fit>
      <Fit w={45} className="ml-[781px]">19 Mar</Fit>
      <Fit w={36} className="ml-[8px]">12:43</Fit>
      <svg className="ml-[17px]" width="16" height="16" viewBox="0 0 16 16" fill="none" stroke="#eee" strokeWidth="1.100">
        <path d="M2 12.500c2-1.500 2-3.500 2-6a4 4 0 0 1 8 0c0 2.500 0 4.500 2 6zM3.500 1.500C2 2.500 1.500 4 1.500 6M12.500 1.500c1.500 1 2 2.500 2 4.500M6.500 14.500h3M6.500 1.500h3" />
      </svg>
      <div className="ml-auto mr-[16px] flex items-center gap-[12px]">
        <svg width="16" height="16" viewBox="0 0 16 16"><path d="M1 5.500c4-4 10-4 14 0L8 14z" fill="#eee" /><path d="M2.500 6.500c3.500-3 7.500-3 11 0" fill="none" stroke="#131313" strokeWidth="1.200" /></svg>
        <svg width="16" height="16" viewBox="0 0 16 16"><path d="M1 5h3l4-3.500v13L4 11H1z" fill="#eee" /><path d="M9.500 5.500c1.500 1.500 1.500 3.500 0 5M12 3c2.500 3 2.500 7 0 10" fill="none" stroke="#ccc" strokeWidth="1.100" /></svg>
        <svg width="16" height="16" viewBox="0 0 16 16"><rect x="7.600" y="2" width="7.600" height="13" rx="1" fill="none" stroke="#eee" strokeWidth="1.200" /><path d="M9.500 0h4v2h-4zM9 7h5v7H9zM3.500 3 .5 8.500h2L2 13l3.500-6h-2z" fill="#eee" /></svg>
      </div>
    </div>
  );
}

export default function App() {
  return (
    <div className="flex h-[1080px] w-[1920px] flex-col overflow-hidden bg-[#120210] font-['Noto_Sans',sans-serif] text-[14px] leading-[20px]">
      <TopBar />
      <div className="flex min-h-0 flex-1">
        <Dock />
        <FilesWindow />
        <Viewer />
      </div>
    </div>
  );
}
